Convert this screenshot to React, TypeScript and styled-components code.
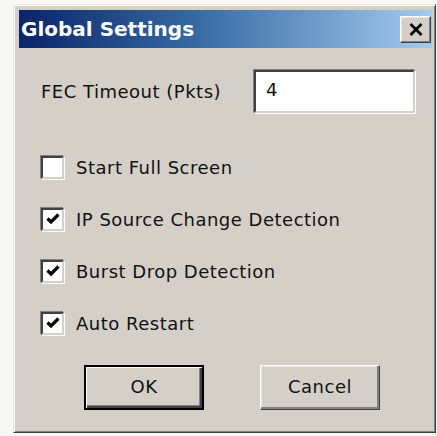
import React from "react";
import styled, { createGlobalStyle } from "styled-components";

const Global = createGlobalStyle`
  html, body {
    margin: 0;
    padding: 0;
    background: #f7f7f4;
  }
  #root {
    width: 437px;
    height: 436px;
    overflow: hidden;
  }
`;

const uiFont = `"DejaVu Sans", sans-serif`;

const Screen = styled.div`
  padding: 4px 1px 3px 13px;
`;

const Window = styled.div`
  box-sizing: border-box;
  width: 423px;
  height: 429px;
  background: #d4d0c8;
  border-style: solid;
  border-width: 1px;
  border-color: #e8e6e0 #404040 #404040 #e8e6e0;
  box-shadow: inset 1px 1px 0 #ffffff, inset -1px -1px 0 #808080;
  padding: 5px 3px 3px 5px;
  display: flex;
  flex-direction: column;
`;

const TitleBar = styled.div`
  height: 38px;
  background: linear-gradient(90deg, #0a246a 0%, #3a6ea5 45%, #a6caf0 100%);
  display: flex;
  align-items: center;
  justify-content: space-between;
  padding: 0 1px 0 2px;
`;

const Title = styled.span`
  color: #ffffff;
  font-family: "DejaVu Sans", sans-serif;
  font-weight: bold;
  font-size: 20px;
`;

const CloseButton = styled.button`
  box-sizing: border-box;
  width: 31px;
  height: 27px;
  padding: 0;
  margin: 0;
  background: #d4d0c8;
  border-style: solid;
  border-width: 1px;
  border-color: #ffffff #404040 #404040 #ffffff;
  box-shadow: inset -1px -1px 0 #808080, inset 1px 1px 0 #e8e6e0;
  display: flex;
  align-items: center;
  justify-content: center;
`;

const Body = styled.div`
  flex: 1;
  display: flex;
  flex-direction: column;
  padding: 22px 0 0 22px;
  font-family: ${uiFont};
  font-size: 18px;
  letter-spacing: 0.5px;
  color: #111111;
`;

const FieldRow = styled.div`
  display: flex;
  align-items: center;
  height: 43px;
  margin-bottom: 28px;
`;

const FieldLabel = styled.label`
  width: 213px;
`;

const TextBox = styled.input`
  box-sizing: border-box;
  width: 161px;
  height: 43px;
  margin: 0;
  background: #ffffff;
  border-style: solid;
  border-width: 2px;
  border-color: #404040 #d4d0c8 #d4d0c8 #404040;
  box-shadow: -1px -1px 0 #808080, 1px 1px 0 #ffffff;
  padding: 0 0 4px 10px;
  font-family: ${uiFont};
  font-size: 18px;
  color: #111111;
  outline: none;
`;

const CheckRow = styled.label`
  display: flex;
  align-items: center;
  height: 52px;
  gap: 12px;
`;

const CheckBox = styled.span<{ $checked: boolean }>`
  box-sizing: border-box;
  width: 23px;
  height: 23px;
  background: #ffffff;
  border-style: solid;
  border-width: 2px;
  border-color: #404040 #d4d0c8 #d4d0c8 #404040;
  box-shadow: -1px -1px 0 #808080, 1px 1px 0 #ffffff;
  display: flex;
  align-items: center;
  justify-content: center;
`;

const ButtonRow = styled.div`
  display: flex;
  gap: 56px;
  margin-top: 16px;
  padding-left: 43px;
`;

const PushButton = styled.button<{ $default?: boolean }>`
  box-sizing: border-box;
  width: 120px;
  height: 45px;
  margin: 0;
  background: #d4d0c8;
  font-family: ${uiFont};
  font-size: 18px;
  letter-spacing: 0.5px;
  color: #111111;
  border-style: solid;
  border-width: ${(p) => (p.$default ? "2px" : "1px")};
  border-color: ${(p) =>
    p.$default ? "#000000" : "#ffffff #404040 #404040 #ffffff"};
  box-shadow: ${(p) =>
    p.$default
      ? "inset 1px 1px 0 #ffffff, inset -2px -2px 0 #404040, inset -3px -3px 0 #808080"
      : "inset -2px -2px 0 #808080, inset 1px 1px 0 #e8e6e0"};
  padding: 0 0 3px 0;
`;

const Check = () => (
  <svg width="14" height="12" viewBox="0 0 14 12">
    <path d="M1.5 5.5 L5 9 L12.5 1.5" fill="none" stroke="#000" strokeWidth="3.2" />
  </svg>
);

const options = [
  { label: "Start Full Screen", checked: false },
  { label: "IP Source Change Detection", checked: true },
  { label: "Burst Drop Detection", checked: true },
  { label: "Auto Restart", checked: true },
];

export default function App() {
  return (
    <>
      <Global />
      <Screen>
        <Window>
          <TitleBar>
            <Title>Global Settings</Title>
            <CloseButton aria-label="Close">
              <svg width="14" height="13" viewBox="0 0 14 13">
                <path d="M1.5 1 L12.5 12 M12.5 1 L1.5 12" stroke="#000" strokeWidth="2.8" />
              </svg>
            </CloseButton>
          </TitleBar>
          <Body>
            <FieldRow>
              <FieldLabel>FEC Timeout (Pkts)</FieldLabel>
              <TextBox defaultValue="4" />
            </FieldRow>
            {options.map((o) => (
              <CheckRow key={o.label}>
                <CheckBox $checked={o.checked}>{o.checked && <Check />}</CheckBox>
                <span>{o.label}</span>
              </CheckRow>
            ))}
            <ButtonRow>
              <PushButton $default>OK</PushButton>
              <PushButton>Cancel</PushButton>
            </ButtonRow>
          </Body>
        </Window>
      </Screen>
    </>
  );
}
